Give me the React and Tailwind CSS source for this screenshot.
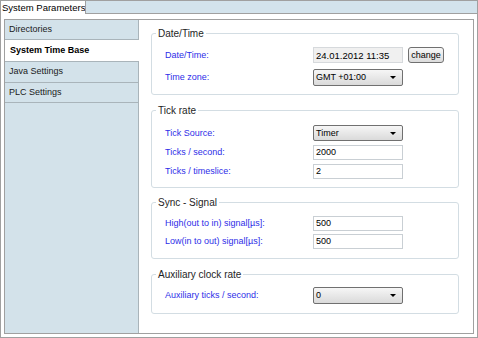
const navItems = [
  { label: "Directories", h: "h-[20px]" },
  { label: "System Time Base", h: "h-[22px]", active: true },
  { label: "Java Settings", h: "h-[21px]" },
  { label: "PLC Settings", h: "h-[20px]" },
];

function Select({ value, h = "h-[16px]" }) {
  return (
    <div className={`flex ${h} w-[90px] items-center justify-between rounded-[2px] border border-[#707070] bg-linear-to-b from-[#f6f6f6] to-[#dadada] pl-[2px] pr-[6px] text-[9px] leading-[11px] text-black`}>
      <span>{value}</span>
      <span className="h-0 w-0 border-x-[3px] border-t-[3px] border-x-transparent border-t-black" />
    </div>
  );
}

function Input({ value, h = "h-[15px]" }) {
  return (
    <div className={`flex ${h} w-[90px] items-center border border-[#c9cfd4] bg-white pl-[2px] text-[9px] leading-[11px] text-black`}>
      {value}
    </div>
  );
}

function Row({ label, children }) {
  return (
    <div className="flex items-center">
      <span className="w-[148px] text-[9px] leading-[11px] text-[#2e2ee8]">{label}</span>
      {children}
    </div>
  );
}

function Group({ title, mt, pt, pb, gap, children }) {
  return (
    <fieldset className={`ml-[12px] w-[308px] rounded-[3px] border border-[#d3dde3] ${mt} ${pb}`}>
      <legend className="ml-[4px] px-[2px] text-[10px] leading-[11px] text-[#1e1e1e]">{title}</legend>
      <div className={`flex flex-col ${gap} pl-[13px] ${pt}`}>{children}</div>
    </fieldset>
  );
}

export default function App() {
  return (
    <div className="h-[338px] w-[478px] overflow-hidden bg-white font-['Liberation_Sans',Arial,sans-serif]">
      {/* tab strip */}
      <div className="flex h-[14px]">
        <div className="flex w-[86px] items-center overflow-hidden whitespace-nowrap border-l border-r border-t border-[#a0a0a0] bg-white pl-[1px] text-[9.5px] leading-[12px] text-black">
          System Parameters
        </div>
        <div className="flex-1 border-b border-r border-t border-[#a0a0a0] bg-[#d3e3ec]" />
      </div>

      {/* panel */}
      <div className="h-[324px] border-b border-l border-r border-[#a0a0a0] px-[3px] pb-[3px] pt-[5px]">
        <div className="flex h-[315px] border border-[#a0a0a0]">
          <div className="flex w-[134px] flex-col">
            {navItems.map((item) =>
              item.active ? (
                <div key={item.label} className={`flex ${item.h} items-center border-b border-[#a9b4ba] bg-white pl-[5px] text-[9px] font-bold text-black`}>
                  {item.label}
                </div>
              ) : (
                <div key={item.label} className={`flex ${item.h} items-center border-b border-r border-[#a9b4ba] bg-[#d3e2ea] pl-[4px] text-[9px] text-[#1a1a1a]`}>
                  {item.label}
                </div>
              )
            )}
            <div className="flex-1 border-r border-[#a9b4ba] bg-[#d3e2ea]" />
          </div>

          <div className="flex flex-1 flex-col">
            <Group title="Date/Time" mt="mt-[8px]" pt="pt-[8px]" pb="pb-[8px]" gap="gap-[6px]">
              <Row label="Date/Time:">
                <div className="flex h-[16px] w-[90px] items-center border border-[#d6d9dc] bg-[#f0f0f0] pl-[2px] text-[9.5px] leading-[11px] text-black">
                  24.01.2012 11:35
                </div>
                <div className="ml-[5px] flex h-[16px] w-[36px] items-center justify-center rounded-[3px] border border-[#707070] bg-linear-to-b from-[#f8f8f8] to-[#dcdcdc] text-[9px] leading-[11px] text-black">
                  change
                </div>
              </Row>
              <Row label="Time zone:">
                <Select value="GMT +01:00" h="h-[17px]" />
              </Row>
            </Group>

            <Group title="Tick rate" mt="mt-[10px]" pt="pt-[9px]" pb="pb-[8px]" gap="gap-[4px]">
              <Row label="Tick Source:">
                <Select value="Timer" />
              </Row>
              <Row label="Ticks / second:">
                <Input value="2000" />
              </Row>
              <Row label="Ticks / timeslice:">
                <Input value="2" />
              </Row>
            </Group>

            <Group title="Sync - Signal" mt="mt-[9px]" pt="pt-[8px]" pb="pb-[9px]" gap="gap-[3px]">
              <Row label="High(out to in) signal[µs]:">
                <Input value="500" />
              </Row>
              <Row label="Low(in to out) signal[µs]:">
                <Input value="500" />
              </Row>
            </Group>

            <Group title="Auxiliary clock rate" mt="mt-[10px]" pt="pt-[7px]" pb="pb-[9px]" gap="gap-[4px]">
              <Row label="Auxiliary ticks / second:">
                <Select value="0" h="h-[17px]" />
              </Row>
            </Group>
          </div>
        </div>
      </div>
    </div>
  );
}
